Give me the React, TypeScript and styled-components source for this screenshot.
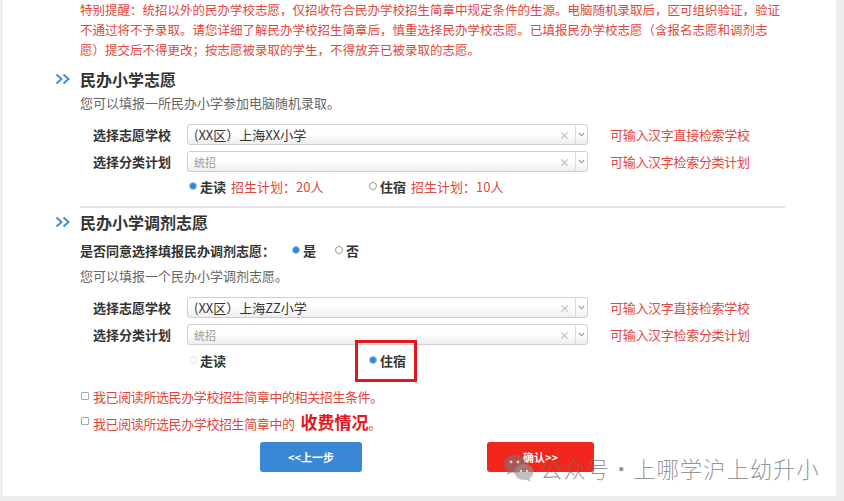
import React from "react";
import styled, { createGlobalStyle } from "styled-components";

const GlobalStyle = createGlobalStyle`
  html, body { margin: 0; padding: 0; background: #eeeeee; }
  body { font-family: "Noto Sans CJK SC", "Noto Sans", sans-serif; }
`;

const Panel = styled.div`
  position: relative;
  box-sizing: border-box;
  width: 833px;
  height: 496px;
  margin-left: 3px;
  background: #fff;
  padding-left: 77px;
  overflow: hidden;
  display: flex;
  flex-direction: column;
  align-items: flex-start;
`;

const Notice = styled.div`
  color: #e2463d;
  line-height: 20px;
`;

const NoticeLine = styled.div`
  font-size: 12.5px;
  letter-spacing: 0;
  white-space: nowrap;
`;

const SectionHeader = styled.div<{ $top: number }>`
  display: flex;
  align-items: center;
  gap: 8px;
  height: 24px;
  margin-left: -25px;
  margin-top: ${(p) => p.$top}px;
  font-size: 16px;
  font-weight: 700;
  color: #333;
`;

const Desc = styled.div<{ $top: number }>`
  margin-top: ${(p) => p.$top}px;
  font-size: 13px;
  line-height: 20px;
  color: #666;
`;

const FormRow = styled.div<{ $top: number }>`
  display: flex;
  align-items: center;
  height: 21px;
  margin-top: ${(p) => p.$top}px;
  padding-left: 13px;
`;

const Label = styled.div`
  width: 94px;
  font-size: 13px;
  font-weight: 700;
  color: #333;
`;

const SelectBox = styled.div`
  box-sizing: border-box;
  width: 401px;
  height: 21px;
  display: flex;
  align-items: center;
  border: 1px solid #cfcfcf;
  border-radius: 3px;
  background: linear-gradient(#ffffff 45%, #eeeeee);
  padding-left: 6px;
`;

const SelectValue = styled.span<{ $placeholder?: boolean }>`
  font-size: ${(p) => (p.$placeholder ? "11px" : "13px")};
  color: ${(p) => (p.$placeholder ? "#9a9a9a" : "#333")};
  white-space: nowrap;
`;

const ClearMark = styled.span`
  margin-left: auto;
  margin-right: 5px;
  font-size: 11px;
  color: #aaa;
`;

const ArrowCell = styled.span`
  width: 11px;
  height: 100%;
  border-left: 1px solid #dcdcdc;
  display: flex;
  align-items: center;
  justify-content: center;
`;

const Hint = styled.div`
  margin-left: 22px;
  font-size: 13px;
  letter-spacing: -0.3px;
  color: #e2463d;
  white-space: nowrap;
`;

const RadioRow = styled.div<{ $top: number }>`
  display: flex;
  align-items: center;
  height: 16px;
  margin-top: ${(p) => p.$top}px;
  padding-left: 109px;
`;

const RadioOption = styled.div<{ $width?: number; $boxed?: boolean }>`
  position: relative;
  display: flex;
  align-items: center;
  gap: 3px;
  width: ${(p) => (p.$width ? `${p.$width}px` : "auto")};
  ${(p) =>
    p.$boxed &&
    `
    &::after {
      content: "";
      position: absolute;
      left: -14px;
      top: -11px;
      width: 62px;
      height: 42px;
      box-sizing: border-box;
      border: 3px solid #e3161d;
    }
  `}
`;

const RadioDot = styled.span<{ $checked?: boolean; $pale?: boolean }>`
  box-sizing: border-box;
  width: 8px;
  height: 8px;
  border-radius: 50%;
  flex: none;
  border: 1px solid
    ${(p) => (p.$checked ? "#9cc6ef" : p.$pale ? "#dddddd" : "#999999")};
  background: ${(p) => (p.$checked ? "#2f86dd" : "#fff")};
`;

const OptionText = styled.span`
  font-size: 13px;
  font-weight: 700;
  color: #333;
`;

const Quota = styled.span`
  margin-left: 2px;
  font-size: 13px;
  color: #e2463d;
`;

const Divider = styled.div`
  width: 705px;
  height: 2px;
  margin-top: 12px;
  background: #e4e4e4;
`;

const AgreeRow = styled.div`
  display: flex;
  align-items: center;
  height: 20px;
  margin-top: 6px;
`;

const AgreeLabel = styled.div`
  width: 212px;
  font-size: 13px;
  font-weight: 700;
  color: #333;
`;

const AgreeOption = styled.div<{ $width: number }>`
  display: flex;
  align-items: center;
  gap: 3px;
  width: ${(p) => p.$width}px;
  font-size: 13px;
  font-weight: 700;
  color: #333;
`;

const CheckRow = styled.div<{ $top: number; $height: number }>`
  display: flex;
  align-items: center;
  gap: 4px;
  height: ${(p) => p.$height}px;
  margin-top: ${(p) => p.$top}px;
  padding-left: 1px;
`;

const CheckText = styled.span`
  font-size: 13px;
  letter-spacing: -0.4px;
  color: #e2463d;
  white-space: nowrap;
`;

const CheckBox = styled.span`
  box-sizing: border-box;
  width: 8px;
  height: 8px;
  flex: none;
  border: 1px solid #a8a8a8;
  border-radius: 1px;
  background: #fff;
`;

const BigRed = styled.span`
  margin-left: 6px;
  font-size: 17px;
  font-weight: 700;
  letter-spacing: 0;
  color: #e3161d;
`;

const ButtonRow = styled.div`
  display: flex;
  align-items: center;
  margin-top: 10px;
  padding-left: 180px;
  gap: 125px;
`;

const ActionButton = styled.div<{ $color: string; $width: number }>`
  width: ${(p) => p.$width}px;
  height: 30px;
  border-radius: 3px;
  background: ${(p) => p.$color};
  color: #fff;
  font-size: 11px;
  font-weight: 700;
  display: flex;
  align-items: center;
  justify-content: center;
`;

const Watermark = styled.div`
  position: absolute;
  left: 500px;
  top: 452px;
  display: flex;
  align-items: center;
  gap: 5px;
  color: rgba(110, 110, 110, 0.72);
  font-size: 22.5px;
  letter-spacing: 0.8px;
  font-weight: 300;
  white-space: nowrap;
  pointer-events: none;
`;

const Chevrons = () => (
  <svg width="17" height="12" viewBox="0 0 17 12">
    <path d="M1.5 1.5 L6.5 6 L1.5 10.5" fill="none" stroke="#3f8fd8" strokeWidth="2" />
    <path d="M8.5 1.5 L13.5 6 L8.5 10.5" fill="none" stroke="#3f8fd8" strokeWidth="2" />
  </svg>
);

const ArrowDown = () => (
  <svg width="7" height="5" viewBox="0 0 7 5">
    <path d="M0.8 1 L3.5 3.8 L6.2 1" fill="none" stroke="#9a9a9a" strokeWidth="1.1" />
  </svg>
);

const WechatIcon = () => (
  <svg width="32" height="30" viewBox="0 0 32 30">
    <ellipse cx="12" cy="11" rx="11" ry="9" fill="rgba(120,120,120,0.6)" />
    <path d="M5 17 L4 22 L9 19 Z" fill="rgba(120,120,120,0.6)" />
    <ellipse cx="21" cy="19" rx="9.5" ry="8" fill="rgba(150,150,150,0.6)" />
    <path d="M26 25 L28 29 L23 26.5 Z" fill="rgba(150,150,150,0.6)" />
    <circle cx="8" cy="9" r="1.4" fill="rgba(255,255,255,0.7)" />
    <circle cx="15" cy="9" r="1.4" fill="rgba(255,255,255,0.7)" />
    <circle cx="18" cy="18" r="1.2" fill="rgba(255,255,255,0.7)" />
    <circle cx="24" cy="18" r="1.2" fill="rgba(255,255,255,0.7)" />
  </svg>
);

const Select = ({ value, placeholder }: { value: string; placeholder?: boolean }) => (
  <SelectBox>
    <SelectValue $placeholder={placeholder}>{value}</SelectValue>
    <ClearMark>×</ClearMark>
    <ArrowCell>
      <ArrowDown />
    </ArrowCell>
  </SelectBox>
);

export default function App() {
  return (
    <>
      <GlobalStyle />
      <Panel>
        <Notice>
          <NoticeLine>
            特别提醒：统招以外的民办学校志愿，仅招收符合民办学校招生简章中规定条件的生源。电脑随机录取后，区可组织验证，验证
          </NoticeLine>
          <NoticeLine>
            不通过将不予录取。请您详细了解民办学校招生简章后，慎重选择民办学校志愿。已填报民办学校志愿（含报名志愿和调剂志
          </NoticeLine>
          <NoticeLine>愿）提交后不得更改；按志愿被录取的学生，不得放弃已被录取的志愿。</NoticeLine>
        </Notice>

        <SectionHeader $top={7}>
          <Chevrons />
          民办小学志愿
        </SectionHeader>
        <Desc $top={2}>您可以填报一所民办小学参加电脑随机录取。</Desc>

        <FormRow $top={11}>
          <Label>选择志愿学校</Label>
          <Select value="(XX区）上海XX小学" />
          <Hint>可输入汉字直接检索学校</Hint>
        </FormRow>
        <FormRow $top={6}>
          <Label>选择分类计划</Label>
          <Select value="统招" placeholder />
          <Hint>可输入汉字检索分类计划</Hint>
        </FormRow>
        <RadioRow $top={6}>
          <RadioOption $width={180}>
            <RadioDot $checked />
            <OptionText>走读</OptionText>
            <Quota>招生计划：20人</Quota>
          </RadioOption>
          <RadioOption>
            <RadioDot />
            <OptionText>住宿</OptionText>
            <Quota>招生计划：10人</Quota>
          </RadioOption>
        </RadioRow>

        <Divider />

        <SectionHeader $top={2}>
          <Chevrons />
          民办小学调剂志愿
        </SectionHeader>
        <AgreeRow>
          <AgreeLabel>是否同意选择填报民办调剂志愿：</AgreeLabel>
          <AgreeOption $width={43}>
            <RadioDot $checked />
            是
          </AgreeOption>
          <AgreeOption $width={30}>
            <RadioDot />
            否
          </AgreeOption>
        </AgreeRow>
        <Desc $top={6}>您可以填报一个民办小学调剂志愿。</Desc>

        <FormRow $top={11}>
          <Label>选择志愿学校</Label>
          <Select value="(XX区）上海ZZ小学" />
          <Hint>可输入汉字直接检索学校</Hint>
        </FormRow>
        <FormRow $top={6}>
          <Label>选择分类计划</Label>
          <Select value="统招" placeholder />
          <Hint>可输入汉字检索分类计划</Hint>
        </FormRow>
        <RadioRow $top={7}>
          <RadioOption $width={180}>
            <RadioDot $pale />
            <OptionText>走读</OptionText>
          </RadioOption>
          <RadioOption $boxed>
            <RadioDot $checked />
            <OptionText>住宿</OptionText>
          </RadioOption>
        </RadioRow>

        <CheckRow $top={19} $height={18}>
          <CheckBox />
          <CheckText>我已阅读所选民办学校招生简章中的相关招生条件。</CheckText>
        </CheckRow>
        <CheckRow $top={5} $height={22}>
          <CheckBox />
          <CheckText>
            我已阅读所选民办学校招生简章中的<BigRed>收费情况</BigRed>。
          </CheckText>
        </CheckRow>

        <ButtonRow>
          <ActionButton $color="#3a88d5" $width={102}>
            &lt;&lt;上一步
          </ActionButton>
          <ActionButton $color="#f2261c" $width={107}>
            确认&gt;&gt;
          </ActionButton>
        </ButtonRow>

        <Watermark>
          <WechatIcon />
          公众号·上哪学沪上幼升小
        </Watermark>
      </Panel>
    </>
  );
}
